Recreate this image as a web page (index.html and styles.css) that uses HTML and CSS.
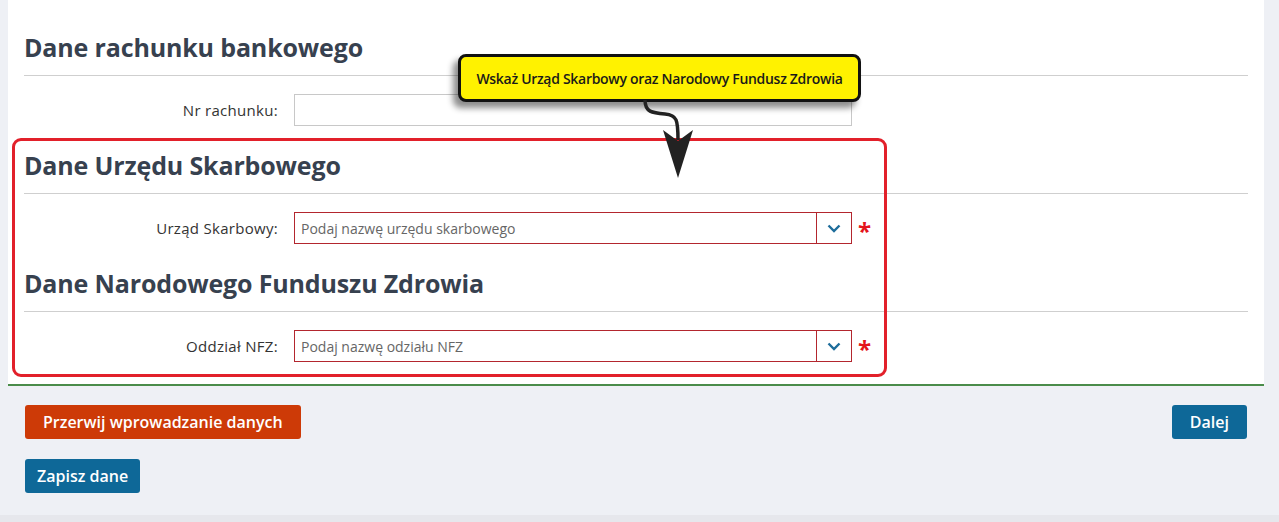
FILE: index.html
```html
<!DOCTYPE html>
<html lang="pl">
<head>
    <meta charset="UTF-8">
    <title>Dane rachunku bankowego</title>
    <link rel="stylesheet" href="styles.css">
</head>
<body>
    <div class="page">
        <div class="panel">
            <h2 class="section-title">Dane rachunku bankowego</h2>
            <div class="form-row">
                <label class="field-label" for="nr">Nr rachunku:</label>
                <input class="text-input" id="nr" type="text">
            </div>

            <h2 class="section-title">Dane Urzędu Skarbowego</h2>
            <div class="form-row">
                <label class="field-label">Urząd Skarbowy:</label>
                <div class="combo">
                    <span class="combo-text">Podaj nazwę urzędu skarbowego</span>
                    <span class="combo-btn">
                        <svg width="14" height="9" viewBox="0 0 14 9"><path d="M1.5 1.5 L7 7 L12.5 1.5" fill="none" stroke="#1d6d9b" stroke-width="2.4"/></svg>
                    </span>
                </div>
                <span class="required">*</span>
            </div>

            <h2 class="section-title">Dane Narodowego Funduszu Zdrowia</h2>
            <div class="form-row">
                <label class="field-label">Oddział NFZ:</label>
                <div class="combo">
                    <span class="combo-text">Podaj nazwę odziału NFZ</span>
                    <span class="combo-btn">
                        <svg width="14" height="9" viewBox="0 0 14 9"><path d="M1.5 1.5 L7 7 L12.5 1.5" fill="none" stroke="#1d6d9b" stroke-width="2.4"/></svg>
                    </span>
                </div>
                <span class="required">*</span>
            </div>

            <!-- annotation overlays -->
            <div class="highlight-box"></div>
            <div class="callout">Wskaż Urząd Skarbowy oraz Narodowy Fundusz Zdrowia</div>
            <svg class="callout-arrow" width="70" height="82" viewBox="0 0 70 82">
                <path d="M15 0 C15 12, 22 13, 35 14 C47 15, 48 20, 48 40" fill="none" stroke="#222" stroke-width="3.5"/>
                <polygon points="33,30 48,41 63,30 48,78" fill="#222"/>
            </svg>
        </div>

        <div class="footer">
            <div class="footer-row">
                <button class="btn btn-danger">Przerwij wprowadzanie danych</button>
                <button class="btn btn-primary">Dalej</button>
            </div>
            <div class="footer-row">
                <button class="btn btn-primary btn-narrow">Zapisz dane</button>
            </div>
        </div>
    </div>
</body>
</html>
```

FILE: styles.css
```css
body {
    margin: 0;
    background-color: #e6e7ec;
    font-family: 'Open Sans', sans-serif;
    color: #333;
}

.page {
    height: 515px;
    background-color: #eef0f5;
    padding: 0 15px 0 8px;
}

.panel {
    position: relative;
    background-color: #fff;
    padding: 29px 16px 22px 16px;
    border-bottom: 2px solid #4a8c4a;
}

.section-title {
    margin: 21px 0 0 0;
    padding-bottom: 10px;
    border-bottom: 1px solid #cfcfcf;
    font-size: 25px;
    line-height: 36px;
    font-weight: 700;
    color: #37414f;
    letter-spacing: -0.15px;
}

.section-title:first-child {
    margin-top: 0;
}

.form-row {
    display: grid;
    grid-template-columns: 254px 558px auto;
    column-gap: 16px;
    align-items: center;
    margin-top: 18px;
}

.field-label {
    text-align: right;
    font-size: 15px;
    letter-spacing: 0.3px;
    color: #333;
}

.text-input {
    box-sizing: border-box;
    height: 32px;
    margin: 0;
    border: 1px solid #c8c8c8;
    background: #fff;
}

.combo {
    box-sizing: border-box;
    height: 32px;
    display: flex;
    align-items: stretch;
    border: 1px solid #b3262e;
}

.combo-text {
    flex: 1;
    display: flex;
    align-items: center;
    padding-left: 6px;
    font-size: 14px;
    color: #666;
}

.combo-btn {
    width: 34px;
    display: flex;
    align-items: center;
    justify-content: center;
    border-left: 1px solid #b3262e;
}

.required {
    margin-left: -10px;
    font-size: 24px;
    font-weight: 700;
    line-height: 1;
    color: #e4141b;
    padding-top: 6px;
}

.highlight-box {
    position: absolute;
    left: 4px;
    top: 138px;
    width: 869px;
    height: 233px;
    border: 3px solid #e2202a;
    border-radius: 9px;
}

.callout {
    position: absolute;
    left: 450px;
    top: 54px;
    width: 397px;
    height: 42px;
    box-sizing: content-box;
    border: 3px solid #111;
    border-radius: 8px;
    background-color: #fff200;
    box-shadow: -5px 6px 6px rgba(0, 0, 0, 0.45);
    display: flex;
    align-items: center;
    justify-content: center;
    font-size: 14px;
    font-weight: 600;
    color: #1a1a1a;
    letter-spacing: -0.3px;
}

.callout-arrow {
    position: absolute;
    left: 622px;
    top: 100px;
}

.footer {
    padding: 19px 17px 0 17px;
    display: flex;
    flex-direction: column;
    gap: 20px;
}

.footer-row {
    display: flex;
    justify-content: space-between;
}

.btn {
    height: 34px;
    padding: 0 18px;
    border: none;
    border-radius: 3px;
    font-family: 'Open Sans', sans-serif;
    font-size: 16px;
    font-weight: 600;
    color: #fff;
}

.btn-narrow {
    padding: 0 12px;
}

.btn-danger {
    background-color: #cd3a07;
}

.btn-primary {
    background-color: #0e6898;
}
```
